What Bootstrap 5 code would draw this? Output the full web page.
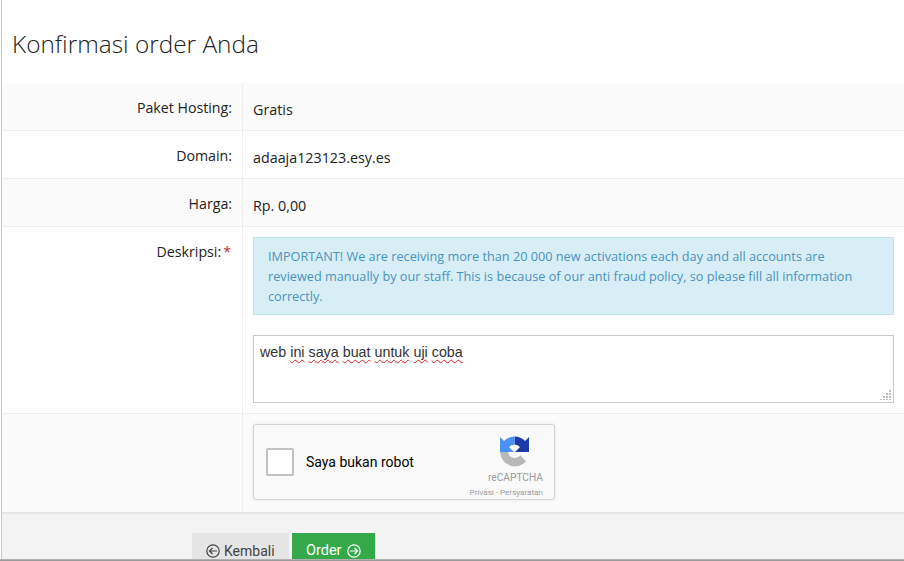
<!DOCTYPE html>
<html lang="id">
<head>
<meta charset="utf-8">
<title>Konfirmasi order Anda</title>
<link href="https://cdn.jsdelivr.net/npm/bootstrap@5.3.0/dist/css/bootstrap.min.css" rel="stylesheet">
<style>
html,body{height:561px;overflow:hidden;background:#fff}
body{font-family:"Open Sans","Liberation Sans",sans-serif;font-size:14px;color:#222}
.shell{height:561px;border-left:1px solid #b9c9f2;margin-left:1px;display:flex;flex-direction:column;position:relative}
.page-title{font-size:24.4px;font-weight:300;line-height:33px;margin:0;padding:27px 0 23px 10px;color:#222}
.order-row{display:flex;border-bottom:1px solid #eee}
.order-row.tint{background:#fbfbfb}
.order-row.plain{background:#fff}
.lbl{width:241px;flex:none;text-align:right;padding:15px 10px 0 0;line-height:20px;border-right:1px solid #eee;color:#222;font-size:14.2px}
.val{flex:1;min-width:0;padding:17px 10px 0 10px;line-height:20px;color:#222;font-size:14.3px}
.h47{height:48px}
.val-desc{padding-top:10px;height:186px}
.val-cap{padding-top:10px}
.req{color:#b8312f;margin-left:2px;margin-right:1px}
.notice{background:#d8eef7;border:1px solid #bce3f0;color:#4a93bd;font-size:12.7px;line-height:20px;padding:8px 14px 7px;height:78px;margin:0}
.txt{display:block;margin-top:20px;height:68px;border:1px solid #c9c9c9;background:#fff;padding:6px;font-family:"Liberation Sans",sans-serif;font-size:14.3px;line-height:20px;color:#333;position:relative}
.sq{text-decoration:underline wavy #e02020 1px;text-underline-offset:2px;text-decoration-skip-ink:none}
.grip{position:absolute;right:1px;bottom:1px}
.cap-row{height:98px}
.cap-box{width:302px;height:76px;background:#f9f9f9;border:1px solid #d3d3d3;border-radius:3px;box-shadow:0 0 4px rgba(0,0,0,.08);display:flex;align-items:center;position:relative;font-family:Roboto,"Liberation Sans",sans-serif}
.cap-check{width:28px;height:28px;background:#fff;border:2px solid #c1c1c1;border-radius:2px;margin-left:12px;flex:none}
.cap-text{font-size:14px;font-weight:400;color:#000;margin-left:12px}
.cap-side{position:absolute;right:11px;top:11px;width:74px;color:#9b9b9b;line-height:1}
.cap-side svg{display:block;margin:0 0 0 30px}
.cap-brand{font-size:10.2px;margin-top:6px;text-align:right}
.cap-links{font-size:8.1px;margin-top:5px;text-align:right;white-space:nowrap}
.bar{flex:1;background:#f3f3f3;border-top:2px solid #e5e5e5;padding:19px 0 0 190px;display:flex;gap:3px;align-items:flex-start;min-height:0}
.act{height:40px;border:0;border-radius:0;font-family:Roboto,"Liberation Sans",sans-serif;font-size:14px;line-height:20px;padding:8px 14px 0;display:flex;align-items:flex-start;gap:4px}
.act svg{margin-top:3px}
.act-back{background:#e5e5e5;color:#444;width:97px}
.act-go{background:#35a84a;color:#fff;width:83px;gap:5px;font-size:14.5px}
.edge{position:absolute;left:-2px;right:0;bottom:0;height:2px;background:linear-gradient(#bdbdbd,#8f8f8f)}
</style>
</head>
<body>
<div class="shell">
  <h1 class="page-title">Konfirmasi order Anda</h1>

  <div class="order-row tint h47">
    <div class="lbl">Paket Hosting:</div>
    <div class="val">Gratis</div>
  </div>
  <div class="order-row plain h47">
    <div class="lbl">Domain:</div>
    <div class="val">adaaja123123.esy.es</div>
  </div>
  <div class="order-row tint h47">
    <div class="lbl">Harga:</div>
    <div class="val">Rp. 0,00</div>
  </div>
  <div class="order-row plain">
    <div class="lbl">Deskripsi:<span class="req">*</span></div>
    <div class="val val-desc">
      <p class="notice">IMPORTANT! We are receiving more than 20 000 new activations each day and all accounts are reviewed manually by our staff. This is because of our anti fraud policy, so please fill all information correctly.</p>
      <div class="txt">web <span class="sq">ini</span> <span class="sq">saya</span> <span class="sq">buat</span> <span class="sq">untuk</span> <span class="sq">uji</span> <span class="sq">coba</span>
        <svg class="grip" width="12" height="12" viewBox="0 0 12 12" fill="#bdbdbd"><rect x="9" y="1" width="2" height="2"/><rect x="6" y="4" width="2" height="2"/><rect x="9" y="4" width="2" height="2"/><rect x="3" y="7" width="2" height="2"/><rect x="6" y="7" width="2" height="2"/><rect x="9" y="7" width="2" height="2"/><rect x="0" y="10" width="2" height="1"/><rect x="3" y="10" width="2" height="1"/><rect x="6" y="10" width="2" height="1"/><rect x="9" y="10" width="2" height="1"/></svg>
      </div>
    </div>
  </div>
  <div class="order-row tint border-0 cap-row">
    <div class="lbl"></div>
    <div class="val val-cap">
      <div class="cap-box">
        <div class="cap-check"></div>
        <div class="cap-text">Saya bukan robot</div>
        <div class="cap-side">
          <svg width="31" height="31" viewBox="0 0 31 31">
            <path d="M15.500 0.500a14.500 14.500 0 0 1 10.600 4.600L30 1v15H16l5-5a7 7 0 0 0-5.500-2.500z" fill="#1c3aa8"/>
            <path d="M15.500 0.500A14.500 14.500 0 0 0 5 5.100L1 1v15h14l-5-5a7 7 0 0 1 5.500-2.500z" fill="#4a90f5"/>
            <path d="M1 16h8a7 7 0 0 0 12.500 3.300l5.500 6.200A15 15 0 0 1 1 16z" fill="#b8b8b8"/>
          </svg>
          <div class="cap-brand">reCAPTCHA</div>
          <div class="cap-links">Privasi - Persyaratan</div>
        </div>
      </div>
    </div>
  </div>

  <div class="bar">
    <button type="button" class="btn act act-back"><svg width="14" height="14" viewBox="0 0 14 14" fill="none" stroke="#444" stroke-width="1.2"><circle cx="7" cy="7" r="6.2"/><path d="M11 7H3.500M6.500 4L3.500 7l3 3"/></svg>Kembali</button>
    <button type="button" class="btn act act-go">Order<svg width="14" height="14" viewBox="0 0 14 14" fill="none" stroke="#fff" stroke-width="1.2"><circle cx="7" cy="7" r="6.2"/><path d="M3 7h7.500M7.500 4l3 3-3 3"/></svg></button>
  </div>
  <div class="edge"></div>
</div>
</body>
</html>
